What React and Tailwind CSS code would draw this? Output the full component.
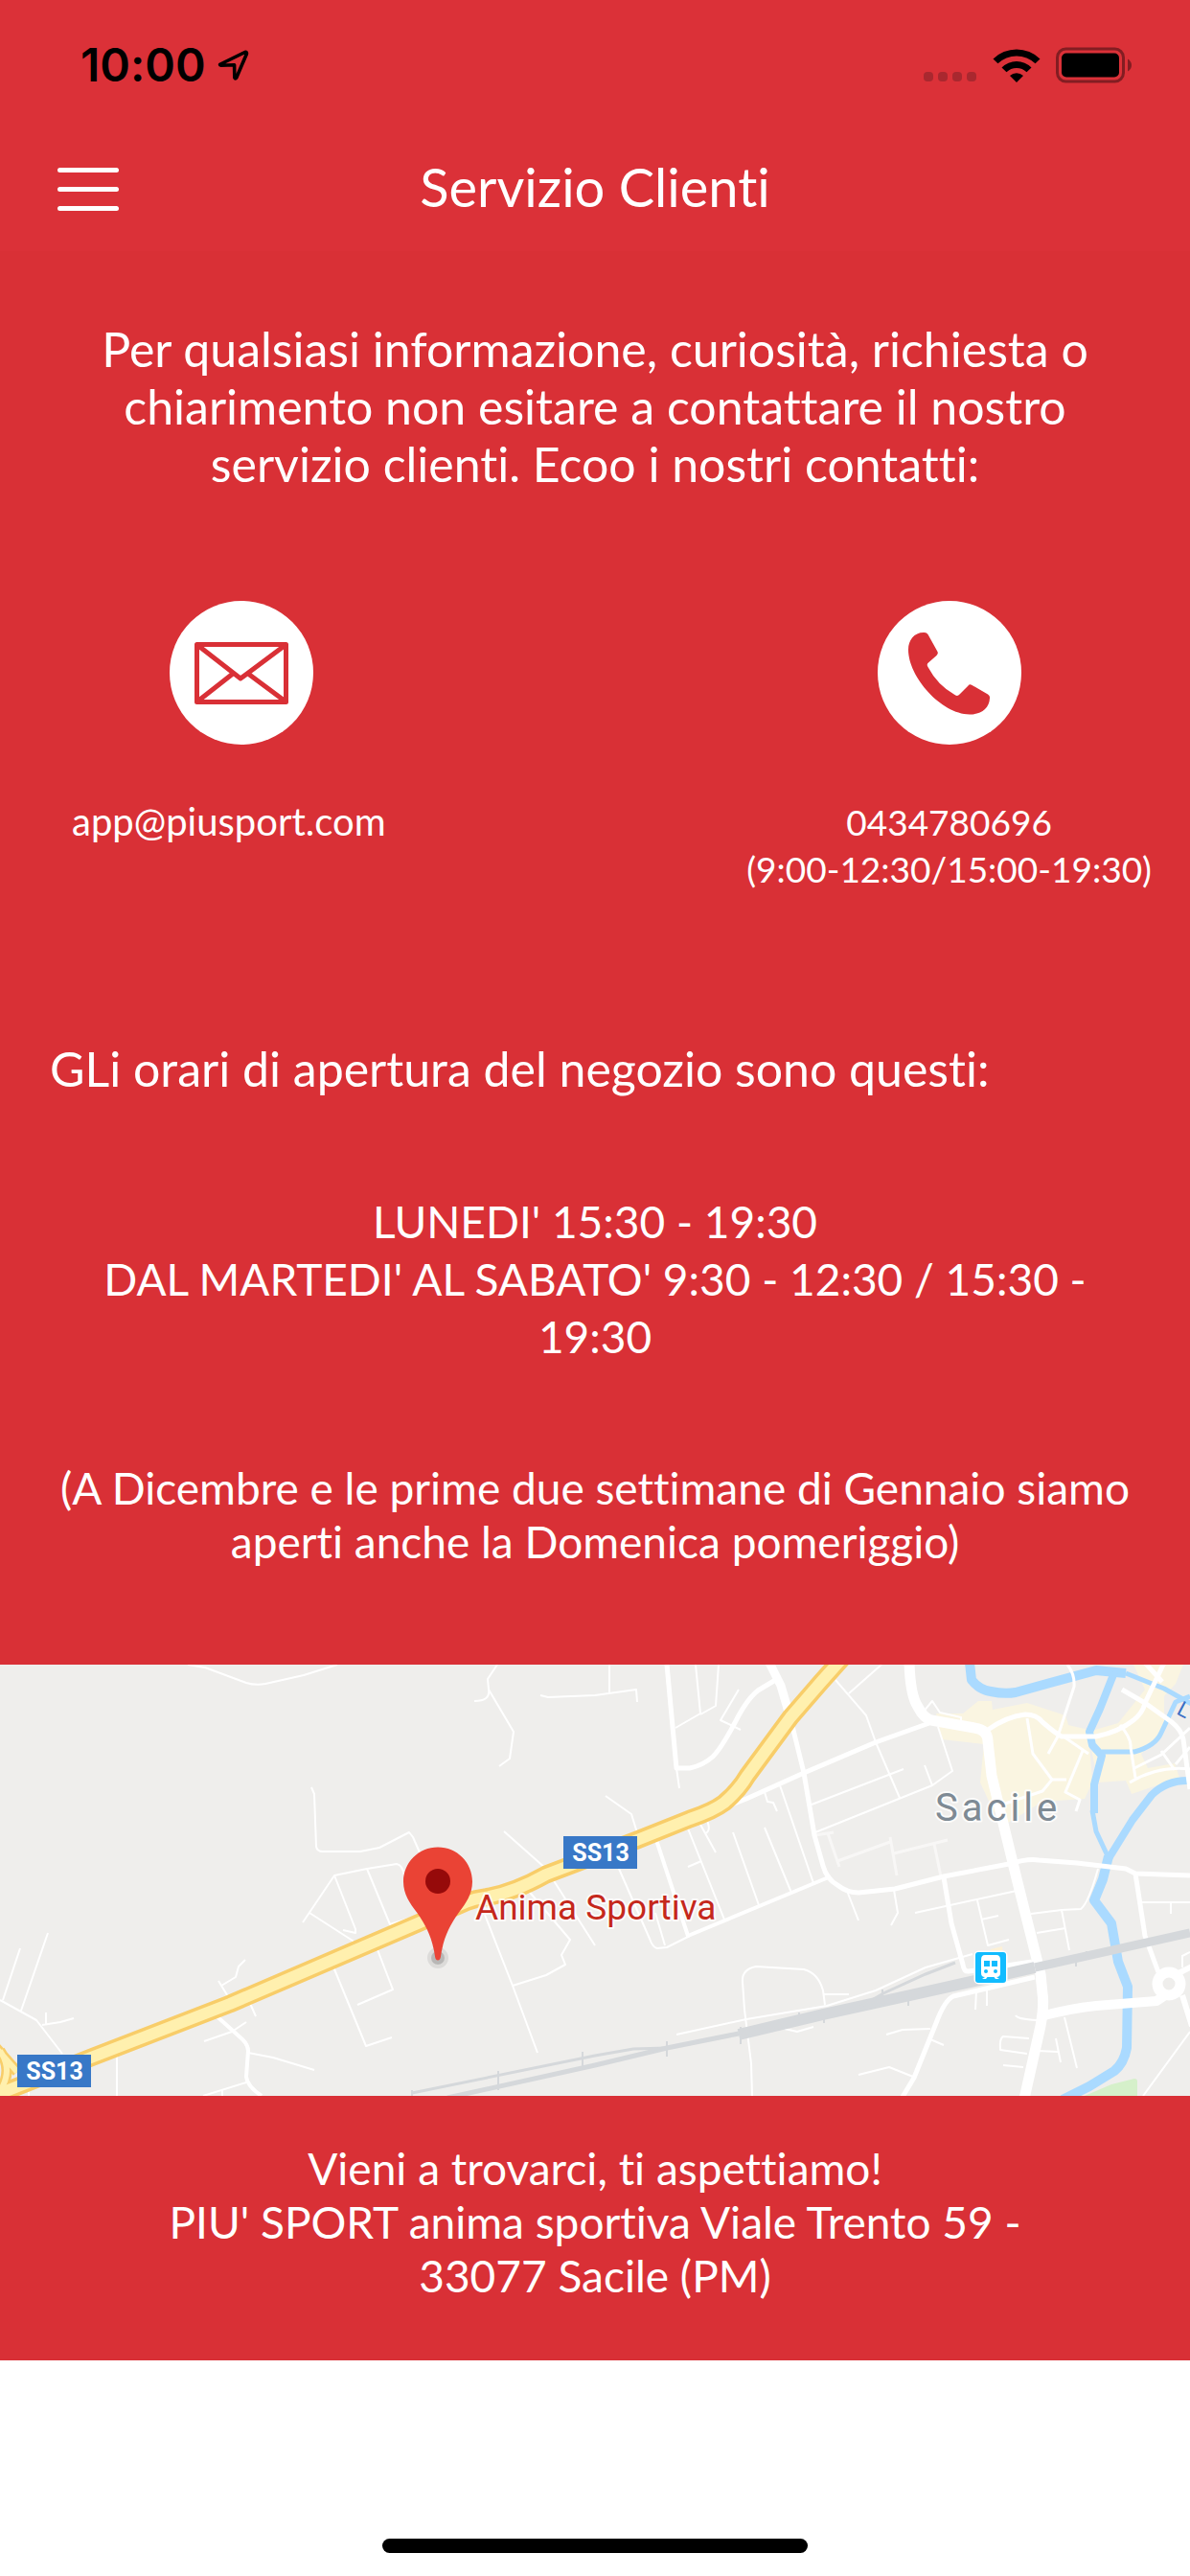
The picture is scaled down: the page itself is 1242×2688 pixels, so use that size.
const StatusBar = () => (
  <div className="flex h-33 items-center justify-between pt-1 pr-15 pl-[84px]">
    <div className="flex items-center gap-3">
      <span className="font-['Inter',sans-serif] text-5xl font-semibold text-black">10:00</span>
      <svg width="34" height="34" viewBox="0 0 34 34" fill="none" className="text-black">
        <path
          d="M3 16 28.5 3.5q2.500-.7 1.800 2L19.800 30q-1.200 1.800-2 0L17.600 16.700 3.500 17.200q-1.500-.6-.5-1.200Z"
          stroke="currentColor"
          strokeWidth="3.600"
          strokeLinejoin="round"
        />
      </svg>
    </div>

    <div className="flex items-center gap-4">
      <svg width="56" height="36" viewBox="0 0 56 36" fill="#a9282f">
        <rect x="0" y="25" width="10" height="10" rx="4" />
        <rect x="15" y="25" width="10" height="10" rx="4" />
        <rect x="30" y="25" width="10" height="10" rx="4" />
        <rect x="45" y="25" width="10" height="10" rx="4" />
      </svg>
      <svg width="50" height="36" viewBox="0 0 50 36" fill="#000">
        <path d="M.5 11.500a35 35 0 0 1 49 0l-5 4.800a28 28 0 0 0-39 0z" />
        <path d="M9.500 20.500a22 22 0 0 1 31 0l-5 4.800a15 15 0 0 0-21 0z" />
        <path d="M18 29a10.500 10.500 0 0 1 14 0l-7 7z" />
      </svg>
      <svg width="80" height="38" viewBox="0 0 80 38">
        <rect x="1.500" y="2" width="69" height="34" rx="9" fill="none" stroke="#831d22" strokeWidth="3" />
        <rect x="6" y="6.500" width="60" height="25" rx="5" fill="#000" />
        <path d="M75 12.500q4 2.500 4 6.500t-4 6.500z" fill="#831d22" />
      </svg>
    </div>
  </div>
);

const NavBar = () => (
  <header className="grid h-[130px] grid-cols-[64px_1fr_64px] items-center px-15">
    <button type="button" aria-label="Menu" className="flex flex-col gap-[15px]">
      <span className="h-[5px] w-full rounded-full bg-white" />
      <span className="h-[5px] w-full rounded-full bg-white" />
      <span className="h-[5px] w-full rounded-full bg-white" />
    </button>
    <h1 className="pb-1 text-center text-[56px]">Servizio Clienti</h1>
  </header>
);

const MailIcon = () => (
  <svg width="150" height="150" viewBox="0 0 150 150">
    <circle cx="75" cy="75" r="75" fill="#fff" />
    <g fill="none" stroke="#d93036" strokeWidth="5" strokeLinejoin="round">
      <path d="M28.500 45.500h93v60h-93z" />
      <path d="m29 46 45 35 47-35M29 105l37-29M121 105 82 76" />
    </g>
  </svg>
);

const PhoneIcon = () => (
  <svg width="150" height="150" viewBox="0 0 150 150">
    <circle cx="75" cy="75" r="75" fill="#fff" />
    <path
      d="M48 33q3-.5 4.500 2l10 18q1 2-1 4l-8 7q-3 2-1 5 10 19 28 29 3 2 5-.5l9-9q1.500-2 4-.5l16.500 9.500q2.500 1.500 2 4c-.5 11-9 17-21 17C66 118 32 79 32 51c0-10 6-18 16-18Z"
      fill="#d93036"
    />
  </svg>
);

const StoreMap = () => (
  <svg viewBox="0 0 1242 450" className="block h-auto w-full bg-[#efeeec] font-['Roboto',sans-serif]">
    {/* Town centre and park */}
    <g fill="#faf5e1">
      <path d="m977 51 28 0 16-13 14 0 1 9 36-7 40 13 3 10 21 5 4 55-8 17-44 3-36 22-15 -12-14-30 4-40-44-5z" />
      <path d="m1183 0h52l-8 20-12 13v37l-24 23 7 15 28-5 5 15-50 17-6-14-29 2-6-30-4-23 31-9 28-35z" />
      <path d="m1034 297 12-3 1 10h-14z" fill="#fdf1d6" />
    </g>
    <path d="M1132 450l28-12 24-6q3 0 3 3v15z" fill="#d5f0ca" />

    {/* Livenza river */}
    <g fill="none" stroke="#aadaff" strokeLinejoin="round">
      <path d="M1012-2l2 18q8 10 20 12 14 3 26 1l36-10 48-13 31 3" strokeWidth="10" />
      <path d="M1175 9l40 16 32 18" strokeWidth="5" />
      <path d="M1163 8l-15 38-11 24 3 14 10 11-8 30 0 30" strokeWidth="8" />
      <path d="M1140 152l4 22 14 30" strokeWidth="5" />
      <path d="M1157 200l-6 24-9 22 18 24 7 40 10 26-1 64q-3 16-13 24l-26 16-28 14" strokeWidth="10" />
      <path d="M1156 204l26-42 20-26q16-16 40-15" strokeWidth="8" />
      <path d="M1150 91h34q22-6 28-20l15-32 15-6" strokeWidth="5" />
    </g>

    {/* Minor streets */}
    <g fill="none" stroke="#fff" strokeWidth="2" strokeLinejoin="round">
      <path d="M196 0l18 3 43 16q10 3 20 1l40-9 35-11" />
      <path d="M519 0l-10 15 1 11 26 44-4 28-11 8M510 26q2 12-15 12" />
      <path d="M564 32l8 2 49-2 43-6 1 13M636 0v30" />
      <path d="M325 128l3 7 2 55q1 5 7 5h39l20-4 31-16 4 5 7 16" />
      <path d="M316 269l33-49 34-7 31-5q6 1 8 12M349 220l22 56v4l-13-3M383 213l24 58 29-9M323 259l45 29 3 7" />
      <path d="M526 174l44 39 51 80M549 233l46 54-9 16 4 10-20 11-35 11M506 261l29 74 26 70" />
      <path d="M347 313l35 85 27-9M393 295l17 44-37 16" />
      <path d="M256 308l-7 7-3 11-15 9M228 330l11 18M259 349l8 18M213 393l29-10 15-10M259 405l26 5 43 13M212 450l45-14M232 444v6" />
      <path d="M50 280l-28 81M21 296L3 350M0 350l38 21 27 35M48 363v13M44 376l19-3 14-4M122 403v47M30 440v10" />
      <path d="M706 108l3 21M726 0l5 51-26 15M750 0l-3 43-16 9M771 26l-19 32 21 10" />
      <path d="M716 166l40 100M765 175l27 76M798 170l28 68M814 126l35 102M632 137l27 19 8 26M646 213l32 73q3 9 8 10l10-1 24-12" />
      <path d="M737 160q6 14-1 16M730 165l17 31M798 133l3 10 6 1 4 9M718 211l14-6M684 259l10 34" />
      <path d="M872 16l32 37 10 28 25 58M920 0l-34 30M979 65l15 46-21 15-122 49M847 146l96-37M965 105l8 21" />
      <path d="M884 236l12 31M933 235l4 24-7 13M955 259l106-23M1020 246l11 47 22-6M1024 266l18-4" />
      <path d="M1076 260l32-4 8 42M1082 280l30-5M1108 256l20-1q8-6 18-42" />
      <path d="M925 386l17-5 29-1M971 391l14 6M896 428l32-8 25 10M1019 341l-1 19M1030 340v16" />
      <path d="M861 355l-2-15q-5-18-20-22l-50-3q-15 3-14 16l2 29 7 56 1 34M706 386l73-16 84-14 51-16 52-24 49-14M859 344h27M819 380l13 3 17-5" />
      <path d="M1060 366q2 4 22 5M1074 390l-27-2q-4 2-3 14l28 4M1047 418l21 2M1111 368l13 53M1102 390l5 25M1084 403l20 1" />
      <path d="M1242 383l-49 67M1191 248h51M1222 248v12M1242 300l-8 4v12M963 50l10-12 8 12 22 5v5" />
    </g>
    <g fill="none" stroke="#f8f7f6" strokeWidth="3">
      <path d="M851 178l19-3M864 176l12 35M874 205l55-20M929 180l7 40M933 197l56-14M975 187l7 34" />
    </g>

    {/* Secondary roads */}
    <g fill="none" stroke="#fff" strokeLinejoin="round">
      <path d="M223 364l30 27q6 6 6 12l-2 27q1 10 16 20" strokeWidth="4" />
      <path d="M696 0l10 108h14q14-3 24-12 10-10 27-43 10-18 20-26l20-12" strokeWidth="5" />
      <path d="M684 180l34 103 149-62" strokeWidth="4" />
      <path d="M803-2l12 24 10 34" strokeWidth="9" />
      <path d="M825 56l14 57 11 65 9 32q4 14 15 20 10 8 22 8l38-4 51-13 68-13q20-6 31-4l40 3 51 6 10 5 57 2" strokeWidth="5" />
      <path d="M758 148l21-8 60-27 75-32 56-20" strokeWidth="5" />
      <path d="M985 222l8 48 12 43q1 8 6 7l66-10" strokeWidth="5" />
      <path d="M1080 326l-85 20q-9 4-18 28l-23 57-12 20" strokeWidth="5" />
      <path d="M1031 68q20-14 39-16 12 0 18 8 14 12 20 15h36q24-5 39-17 10-8 12-18l20-42" strokeWidth="5" />
      <path d="M1171 26l24 14 28 20q10 8 12 18l7 52M1195-2l18 20" strokeWidth="5" />
      <path d="M1114 0q8 10 7 23l-17 52-10 18M1072 56l6 37 20 27-10 12-39 13M1110 75l26 18M1130 90l-18 43 15 8-4 12M1098 120h15" strokeWidth="3" />
      <path d="M1169 63q12 14 11 23l5 32M1184 108l28-14 30-28M1179 123q30-18 63-14M1212 90l14 20M1242 86l-15 18" strokeWidth="3" />
      <path d="M949-2q1 34 9 46 6 12 14 14l45 8q14 2 14 14l4 36 26 107 15 60 10 40 2 20q2 12-2 34l-17 76" strokeWidth="11" />
      <path d="M1086 367q30-8 58-11l63-5 12-8" strokeWidth="10" />
      <circle cx="1220" cy="333" r="12" strokeWidth="11" fill="#efeeec" />
      <path d="M1185 218l10 65 14 38" strokeWidth="5" />
      <path d="M1230 322l14-7M1234 345l10 32" strokeWidth="6" />
    </g>

    {/* Rail line */}
    <g fill="none" stroke="#d5d8db">
      <path d="M430 447l191-39 40-7 35-1" strokeWidth="3" />
      <path d="M467 452l154-34 75-18 75-15" strokeWidth="5" />
      <path d="M771 386l88-21 91-20 130-29" strokeWidth="12" />
      <path d="M1080 316l162-36" strokeWidth="9" />
      <path d="M898 357l24-14 44-20 31-12" strokeWidth="3" />
      <path d="M430 444v6M520 424v20M608 404v18M696 393v16M773 378v18M834 363v10M860 362v12M921 339v10M948 348v8M959 338v8M1123 303v12M1134 299v8M1205 284v6" strokeWidth="2" />
    </g>

    {/* SS13 state road */}
    <g fill="none" strokeLinejoin="round">
      <path d="M-4 400l22 25M0 403q14 20 0 42" stroke="#f8cd69" strokeWidth="11" />
      <path
        d="M-4 449L95 410l145-56 196-84 50-22q10-4 20-5 30-5 64-24l95-36 55-22q24-8 36-17 16-14 24-28L825 55 857 18 882-10"
        stroke="#f8cd69"
        strokeWidth="19"
      />
      <path d="M-4 400l22 25M0 403q14 20 0 42" stroke="#fff0ae" strokeWidth="6" />
      <path
        d="M-4 449L95 410l145-56 196-84 50-22q10-4 20-5 30-5 64-24l95-36 55-22q24-8 36-17 16-14 24-28L825 55 857 18 882-10"
        stroke="#fff0ae"
        strokeWidth="12"
      />
    </g>

    {/* Road shields */}
    <g fontSize="25" fontWeight="700" fill="#fff" textAnchor="middle">
      <rect x="18" y="407" width="77" height="34" fill="#3878c7" />
      <text x="57" y="433">SS13</text>
      <rect x="588" y="179" width="77" height="34" fill="#3878c7" />
      <text x="627" y="205">SS13</text>
    </g>

    {/* Place names */}
    <g stroke="#fff" strokeOpacity="0.8" strokeWidth="4" strokeLinejoin="round" paintOrder="stroke">
      <text x="976" y="163" fontSize="40" letterSpacing="4" fill="#7e8a94">Sacile</text>
      <text x="496" y="266" fontSize="37" fill="#c5281c">Anima Sportiva</text>
    </g>
    <text x="1227" y="51" fontSize="22" fill="#3b6fc4" transform="rotate(28 1227 51)">L</text>

    {/* Train station */}
    <g>
      <rect x="1016.500" y="298.500" width="35" height="35" rx="5" fill="#fff" />
      <rect x="1018" y="300" width="32" height="32" rx="3" fill="#12bcff" />
      <path d="M1028 303h12q4 0 4 5v14q0 4-4 4l3 2h-4l-1.500-2h-7l-1.500 2h-4l3-2q-4 0-4-4v-14q0-5 4-5Z" fill="#fff" />
      <path d="M1027 309h6v6h-6zM1035 309h6v6h-6z" fill="#12bcff" />
      <circle cx="1029" cy="320" r="2" fill="#12bcff" />
      <circle cx="1039" cy="320" r="2" fill="#12bcff" />
    </g>

    {/* Store pin */}
    <g>
      <circle cx="457" cy="306" r="11" fill="#000" opacity="0.08" />
      <circle cx="457" cy="306" r="7" fill="#000" opacity="0.16" />
      <path d="M457 190.500c20 0 36 16 36 36 0 13-7 23-14 32-10 14-16 26-19 46q-.5 4-3 4t-3-4c-3-20-9-32-19-46-7-9-14-19-14-32 0-20 16-36 36-36Z" fill="#ea4335" />
      <circle cx="457" cy="226" r="13" fill="#960a0a" />
    </g>
  </svg>
);

const App = () => {
  return (
    <div className="flex min-h-screen flex-col bg-white font-['Lato',sans-serif] text-white [font-variant-ligatures:none]">
      <div className="bg-[#db3138]">
        <StatusBar />
        <NavBar />
      </div>

      <main className="bg-[#d93036]">
        <p className="px-15 pt-18 text-center text-[50px] leading-[60px]">
          Per qualsiasi informazione, curiosità, richiesta o
          <br />
          chiarimento non esitare a contattare il nostro
          <br />
          servizio clienti. Ecoo i nostri contatti:
        </p>

        {/* Contacts */}
        <section className="flex justify-between pt-[113px] pr-10 pl-[75px] leading-[49px]">
          <div className="flex w-[354px] flex-col items-center gap-14">
            <MailIcon />
            <a href="mailto:app@piusport.com" className="w-full text-[40px]">app@piusport.com</a>
          </div>
          <div className="flex flex-col items-center gap-14 text-center">
            <PhoneIcon />
            <a href="tel:0434780696" className="text-[37px]">
              0434780696
              <br />
              (9:00-12:30/15:00-19:30)
            </a>
          </div>
        </section>

        {/* Opening hours */}
        <section className="px-13 pt-[154px] pb-25 text-center">
          <h2 className="text-left text-[50px] leading-[60px]">
            GLi orari di apertura del negozio sono questi:
          </h2>
          <p className="pt-25 text-[46px] leading-[60px]">
            LUNEDI' 15:30 - 19:30
            <br />
            DAL MARTEDI' AL SABATO' 9:30 - 12:30 / 15:30 -
            <br />
            19:30
          </p>
          <p className="pt-25 text-[46px] leading-[56px]">
            (A Dicembre e le prime due settimane di Gennaio siamo
            <br />
            aperti anche la Domenica pomeriggio)
          </p>
        </section>

        <StoreMap />

        <p className="pt-12 pb-15 text-center text-[46px] leading-[56px]">
          Vieni a trovarci, ti aspettiamo!
          <br />
          PIU' SPORT anima sportiva Viale Trento 59 -
          <br />
          33077 Sacile (PM)
        </p>
      </main>

      <div className="mt-auto flex justify-center pb-6">
        <div className="h-[15px] w-[444px] rounded-full bg-black" />
      </div>
    </div>
  );
};

export default App;
